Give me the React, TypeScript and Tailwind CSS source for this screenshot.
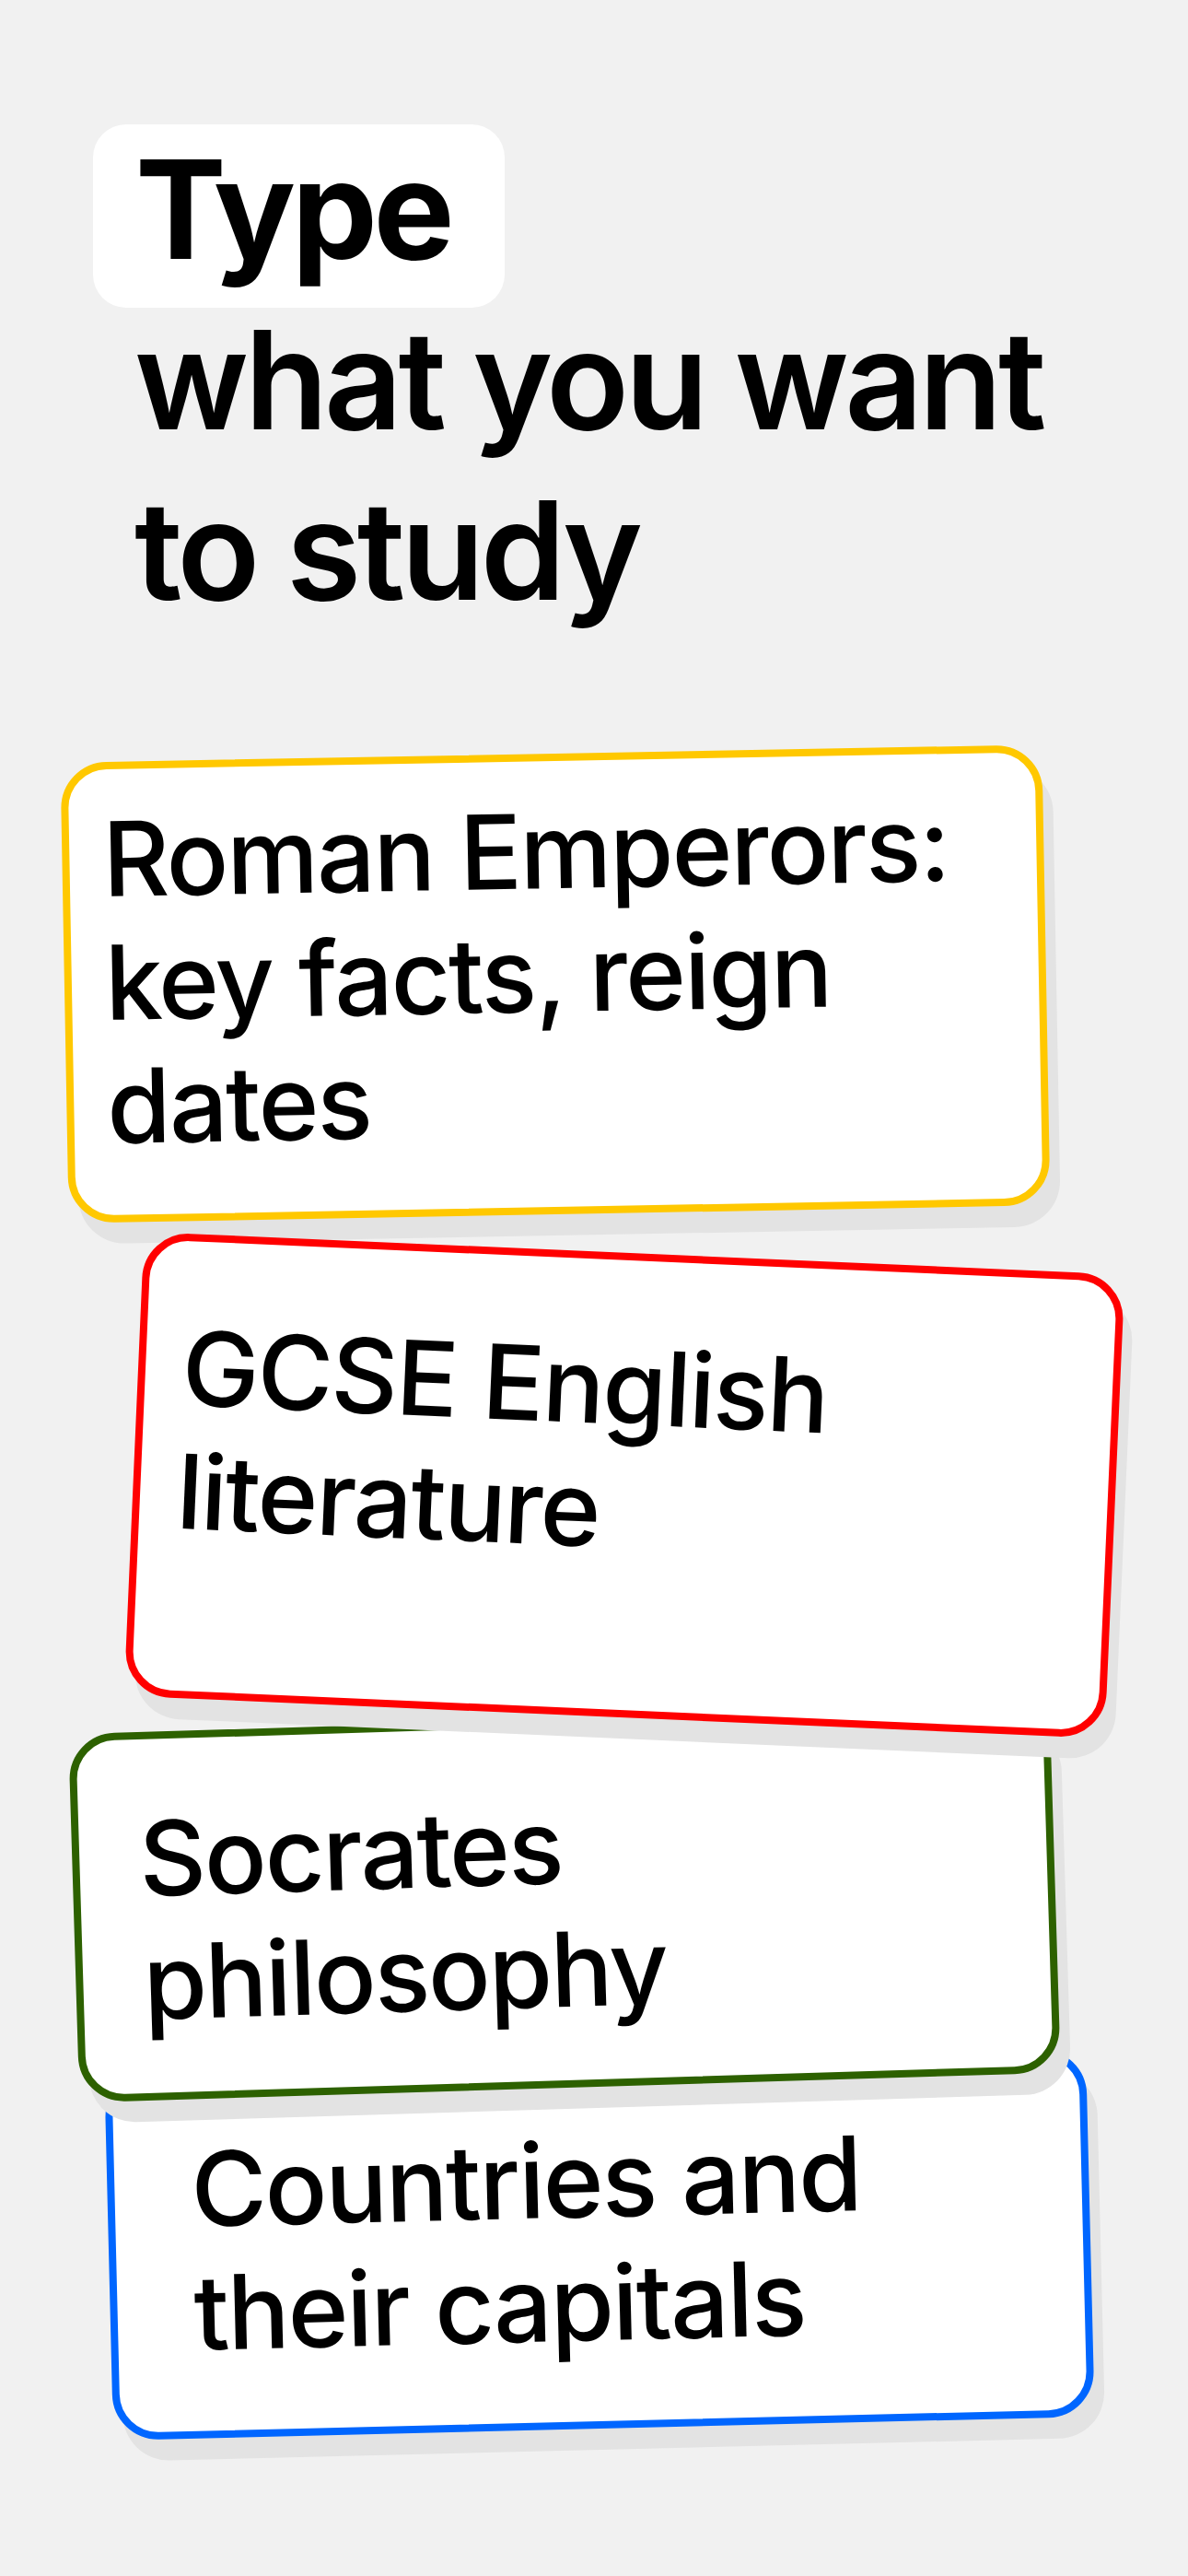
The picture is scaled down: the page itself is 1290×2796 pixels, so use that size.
const cards = [
  {
    text: "Roman Emperors: key facts, reign dates",
    className:
      "relative z-0 ml-[70px] h-[500px] -rotate-[1.05deg] border-[#ffc800] pt-[30px] pl-[36px]",
  },
  {
    text: "GCSE English literature",
    className:
      "relative z-30 mt-[42px] ml-[145px] h-[504px] rotate-[2.5deg] border-[#ff0000] pt-[70px] pl-[40px]",
  },
  {
    text: "Socrates philosophy",
    className:
      "relative z-20 mt-[2px] ml-[80px] h-[400px] -rotate-[1.75deg] border-[#2d6100] pt-[62px] pl-[65px]",
  },
  {
    text: "Countries and their capitals",
    className:
      "relative z-10 -mt-[30px] ml-[118px] h-[400px] -rotate-[1.4deg] border-[#0066ff] pt-[54px] pl-[83px]",
  },
];

export default function App() {
  return (
    <div className="min-h-[2796px] w-[1290px] bg-[#f1f1f1] pt-[135px] font-['Inter','Noto_Sans',sans-serif] text-black">
      <h1 className="pl-[146px] text-[148px] leading-[185px] font-semibold tracking-[-0.03em]">
        <div className="-ml-[45px] -mb-[14px] w-[447px] rounded-[36px] bg-white pb-[14px] pl-[46px] font-bold">
          Type
        </div>
        <div>what you want</div>
        <div>to study</div>
      </h1>

      <div className="mt-[128px] flex flex-col">
        {cards.map((card) => (
          <div
            key={card.text}
            className={`w-[1066px] rounded-[50px] border-[8px] bg-white pr-[40px] text-[112px] leading-[134px] font-medium tracking-[-0.017em] shadow-[11px_23px_0_#e3e3e3] ${card.className}`}
          >
            {card.text}
          </div>
        ))}
      </div>
    </div>
  );
}
